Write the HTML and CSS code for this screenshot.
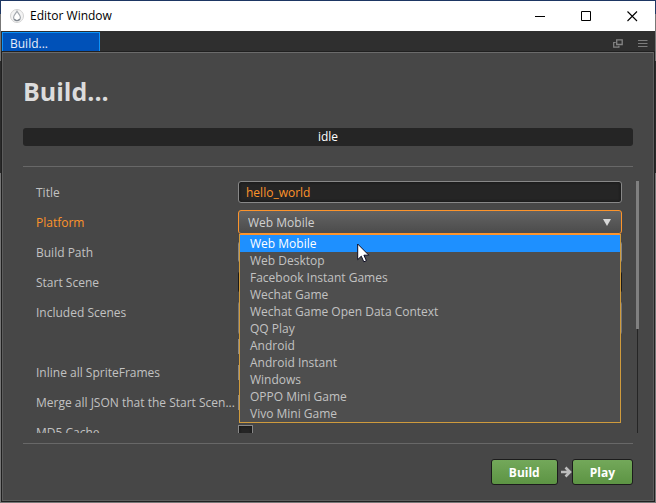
FILE: index.html
```html
<!DOCTYPE html>
<html lang="en">
<head>
<meta charset="utf-8">
<title>Editor Window</title>
<link rel="stylesheet" href="styles.css">
</head>
<body>
<div class="window">
  <header class="titlebar">
    <svg class="logo" viewBox="0 0 14 14" width="14" height="14" aria-hidden="true">
      <circle cx="7" cy="7" r="6.5" fill="#f4f4f4" stroke="#d2d2d2"/>
      <path d="M7 2.2C6 4.2 3.6 5.9 3.6 8.3a3.4 3.4 0 0 0 6.8 0C10.400 5.900 8 4.200 7 2.200z" fill="#fff" stroke="#a4a9af" stroke-width="1.2"/>
      <path d="M4.300 10.200a3.400 3.400 0 0 0 5.400 0" fill="none" stroke="#7f868e" stroke-width="1.200"/>
    </svg>
    <span class="caption">Editor Window</span>
    <button class="wbtn" type="button" aria-label="Minimize"><svg viewBox="0 0 11 11" width="11" height="11"><path d="M0 5.500h10" stroke="#000"/></svg></button>
    <button class="wbtn" type="button" aria-label="Maximize"><svg viewBox="0 0 11 11" width="11" height="11"><path d="M.5.5h9v9h-9z" fill="none" stroke="#000"/></svg></button>
    <button class="wbtn" type="button" aria-label="Close"><svg viewBox="0 0 11 11" width="11" height="11"><path d="M.5.5l9.500 9.500M10 .5L.5 10" fill="none" stroke="#000" stroke-width="1.100"/></svg></button>
  </header>
  <nav class="tabbar">
    <button class="tab" type="button">Build...</button>
    <button class="tool" type="button" aria-label="Pop out"><svg viewBox="0 0 10 9" width="10" height="9"><path d="M3.700.8h5.500v4.700H3.700z" fill="none" stroke="#858585" stroke-width="1.300"/><path d="M2.700 3.500H.7v4.700h5.200V6.800" fill="none" stroke="#858585" stroke-width="1.200"/></svg></button>
    <button class="tool" type="button" aria-label="Menu"><svg viewBox="0 0 10 9" width="10" height="9"><path d="M0 1.500h9.500M0 4.500h9.500M0 7.500h9.500" stroke="#7c7c7c"/></svg></button>
  </nav>
  <main class="panel">
    <h1>Build...</h1>
    <div class="status" role="status">idle</div>
    <form class="form">
      <div class="rows">
        <div class="row">
          <label for="title">Title</label>
          <input class="text" id="title" type="text" value="hello_world">
        </div>
        <div class="row">
          <label class="active" for="platform">Platform</label>
          <div class="picker">
            <select id="platform"><option>Web Mobile</option></select>
            <svg class="arrow" viewBox="0 0 8 7" width="8" height="7" aria-hidden="true"><path d="M0 0h8L4 7z" fill="#d8d8d8"/></svg>
            <ul class="menu" role="listbox" aria-label="Platform">
              <li class="selected" role="option" aria-selected="true">Web Mobile</li>
              <li role="option">Web Desktop</li>
              <li role="option">Facebook Instant Games</li>
              <li role="option">Wechat Game</li>
              <li role="option">Wechat Game Open Data Context</li>
              <li role="option">QQ Play</li>
              <li role="option">Android</li>
              <li role="option">Android Instant</li>
              <li role="option">Windows</li>
              <li role="option">OPPO Mini Game</li>
              <li role="option">Vivo Mini Game</li>
            </ul>
            <svg class="cursor" viewBox="0 0 13 20" width="13" height="20" aria-hidden="true"><path d="M.7 1v15.600l3.600-3.400 2.500 5.600 2.600-1.100-2.500-5.500h4.900z" fill="#fff" stroke="#0a0a20"/></svg>
          </div>
        </div>
        <div class="row">
          <label for="path">Build Path</label>
          <input class="text" id="path" type="text">
        </div>
        <div class="row">
          <label for="scene">Start Scene</label>
          <input class="text dark" id="scene" type="text">
        </div>
        <div class="row tall">
          <label for="all">Included Scenes</label>
          <div class="scenes">
            <div class="box"></div>
            <input class="check" id="all" type="checkbox">
          </div>
        </div>
        <div class="row">
          <label for="inline">Inline all SpriteFrames</label>
          <input class="check" id="inline" type="checkbox">
        </div>
        <div class="row">
          <label for="merge">Merge all JSON that the Start Scen...</label>
          <input class="check" id="merge" type="checkbox">
        </div>
        <div class="row">
          <label for="md5">MD5 Cache</label>
          <input class="check" id="md5" type="checkbox">
        </div>
      </div>
      <div class="track"><div class="thumb"></div></div>
    </form>
    <footer class="actions">
      <button class="go" type="button">Build</button>
      <svg class="next" viewBox="0 0 11 12" width="11" height="12" aria-hidden="true"><path d="M0 6h8M4.500 1.500L9 6l-4.500 4.500" fill="none" stroke="#bdbdbd" stroke-width="2.600"/></svg>
      <button class="go" type="button">Play</button>
    </footer>
  </main>
</div>
</body>
</html>
```
FILE: styles.css
```css
* { box-sizing: border-box; }

body {
  margin: 0;
  height: 100vh;
  font: 12px/16px "Open Sans", "Noto Sans", sans-serif;
  color: #c2c2c2;
  background: linear-gradient(#1f3864 14px, #777 14px, #777 61px, #2b2b2b 61px, #2b2b2b 173px, #777 173px);
}

button, input, select { font: inherit; margin: 0; }

.window {
  height: 100vh;
  display: flex;
  flex-direction: column;
  margin: 0 1px;
  padding-bottom: 1px;
  border-top: 1px solid #1d3663;
}

.titlebar {
  display: flex;
  align-items: center;
  flex: 0 0 30px;
  padding-left: 9px;
  background: #fff;
  color: #000;
}

.caption { flex: 1; margin-left: 6px; }

.wbtn {
  display: flex;
  align-items: center;
  justify-content: center;
  width: 46px;
  height: 30px;
  padding: 0;
  border: 0;
  background: none;
}

.tabbar {
  display: flex;
  align-items: center;
  flex: 0 0 21px;
  gap: 15px;
  padding: 1px 7px 0 1px;
  background: #2f2f2f;
}

.tab {
  width: 98px;
  height: 20px;
  margin-right: auto;
  padding: 2px 0 0 7px;
  border: 1px solid #0c93fa;
  border-bottom: 0;
  background: #0051b8;
  color: #e8eefa;
  text-align: left;
}

.tool {
  display: flex;
  margin-top: 3px;
  padding: 0;
  border: 0;
  background: none;
}

.panel {
  display: flex;
  flex-direction: column;
  flex: 1;
  min-height: 0;
  padding: 21px 20px 15px;
  border: 1px solid #5c5c5c;
  border-top-color: #6b6b6b;
  outline: 1px solid #202020;
  margin: 0 1px 1px;
  background: #474747;
}

h1 {
  margin: 0 0 19px;
  font-size: 25px;
  line-height: 35px;
  color: #dcdcdc;
}

.status {
  height: 18px;
  border-radius: 3px;
  background: #252525;
  color: #fff;
  line-height: 18px;
  text-align: center;
}

.form {
  display: flex;
  flex: 1;
  min-height: 0;
  margin-top: 20px;
  padding: 13px 0 10px;
  border-top: 1px solid #686868;
}

.rows {
  display: flex;
  flex-direction: column;
  flex: 1;
  gap: 6px;
  padding-left: 13px;
  overflow: hidden;
}

.row {
  display: grid;
  grid-template-columns: 192px 1fr;
  column-gap: 10px;
  align-items: center;
  flex: 0 0 24px;
}

.row.tall { flex-basis: 54px; align-items: start; }

label { padding-top: 2px; line-height: 22px; white-space: nowrap; }
label.active { color: #fd942b; }

.text {
  width: 100%;
  height: 22px;
  padding: 1px 7px 0;
  border: 1px solid #888;
  border-radius: 3px;
  background: #252525;
  box-shadow: inset 0 0 3px #111;
  color: #fd942b;
}

.text.dark { border-color: #1a1a1a; }

.picker { position: relative; }

select {
  display: block;
  width: 100%;
  height: 24px;
  padding: 2px 9px 0;
  appearance: none;
  border: 1px solid #fd942b;
  border-radius: 3px;
  background: linear-gradient(#636363, #4c4c4c);
  color: #d0d0d0;
}

.arrow { position: absolute; right: 11px; top: 9px; }

.menu {
  position: absolute;
  z-index: 1;
  top: 24px;
  left: 1px;
  right: 1px;
  margin: 0;
  padding: 0;
  list-style: none;
  border: 1px solid #cf9b3d;
  border-top-color: #fd942b;
  background: #4e4e4e;
}

.menu li { padding-left: 10px; line-height: 17px; }
.menu .selected { background: #1e90ff; color: #fff; }

.cursor { position: absolute; z-index: 2; left: 119px; top: 33px; }

.scenes {
  display: flex;
  flex-direction: column;
  gap: 4px;
  padding-top: 1px;
}

.box {
  height: 34px;
  border: 1px solid #777;
  border-radius: 3px;
}

.check {
  width: 15px;
  height: 15px;
  appearance: none;
  border: 1px solid #888;
  background: #252525;
  box-shadow: inset 0 0 3px #111;
}

.track {
  display: flex;
  justify-content: center;
  width: 3px;
  margin: 1px -6px 0 14px;
  background: linear-gradient(#252525, #252525) center / 1px 100% no-repeat;
}

.thumb { width: 3px; height: 148px; background: #808080; }

.actions {
  display: flex;
  align-items: center;
  justify-content: flex-end;
  padding-top: 15px;
  border-top: 1px solid #686868;
}

.next { margin-left: 3px; }

.go {
  height: 26px;
  padding: 1px 17px 0;
  border: 1px solid #1c1c1c;
  border-radius: 3px;
  background: linear-gradient(#73a85a, #5d9444);
  color: #fff;
  font-weight: bold;
}
```
